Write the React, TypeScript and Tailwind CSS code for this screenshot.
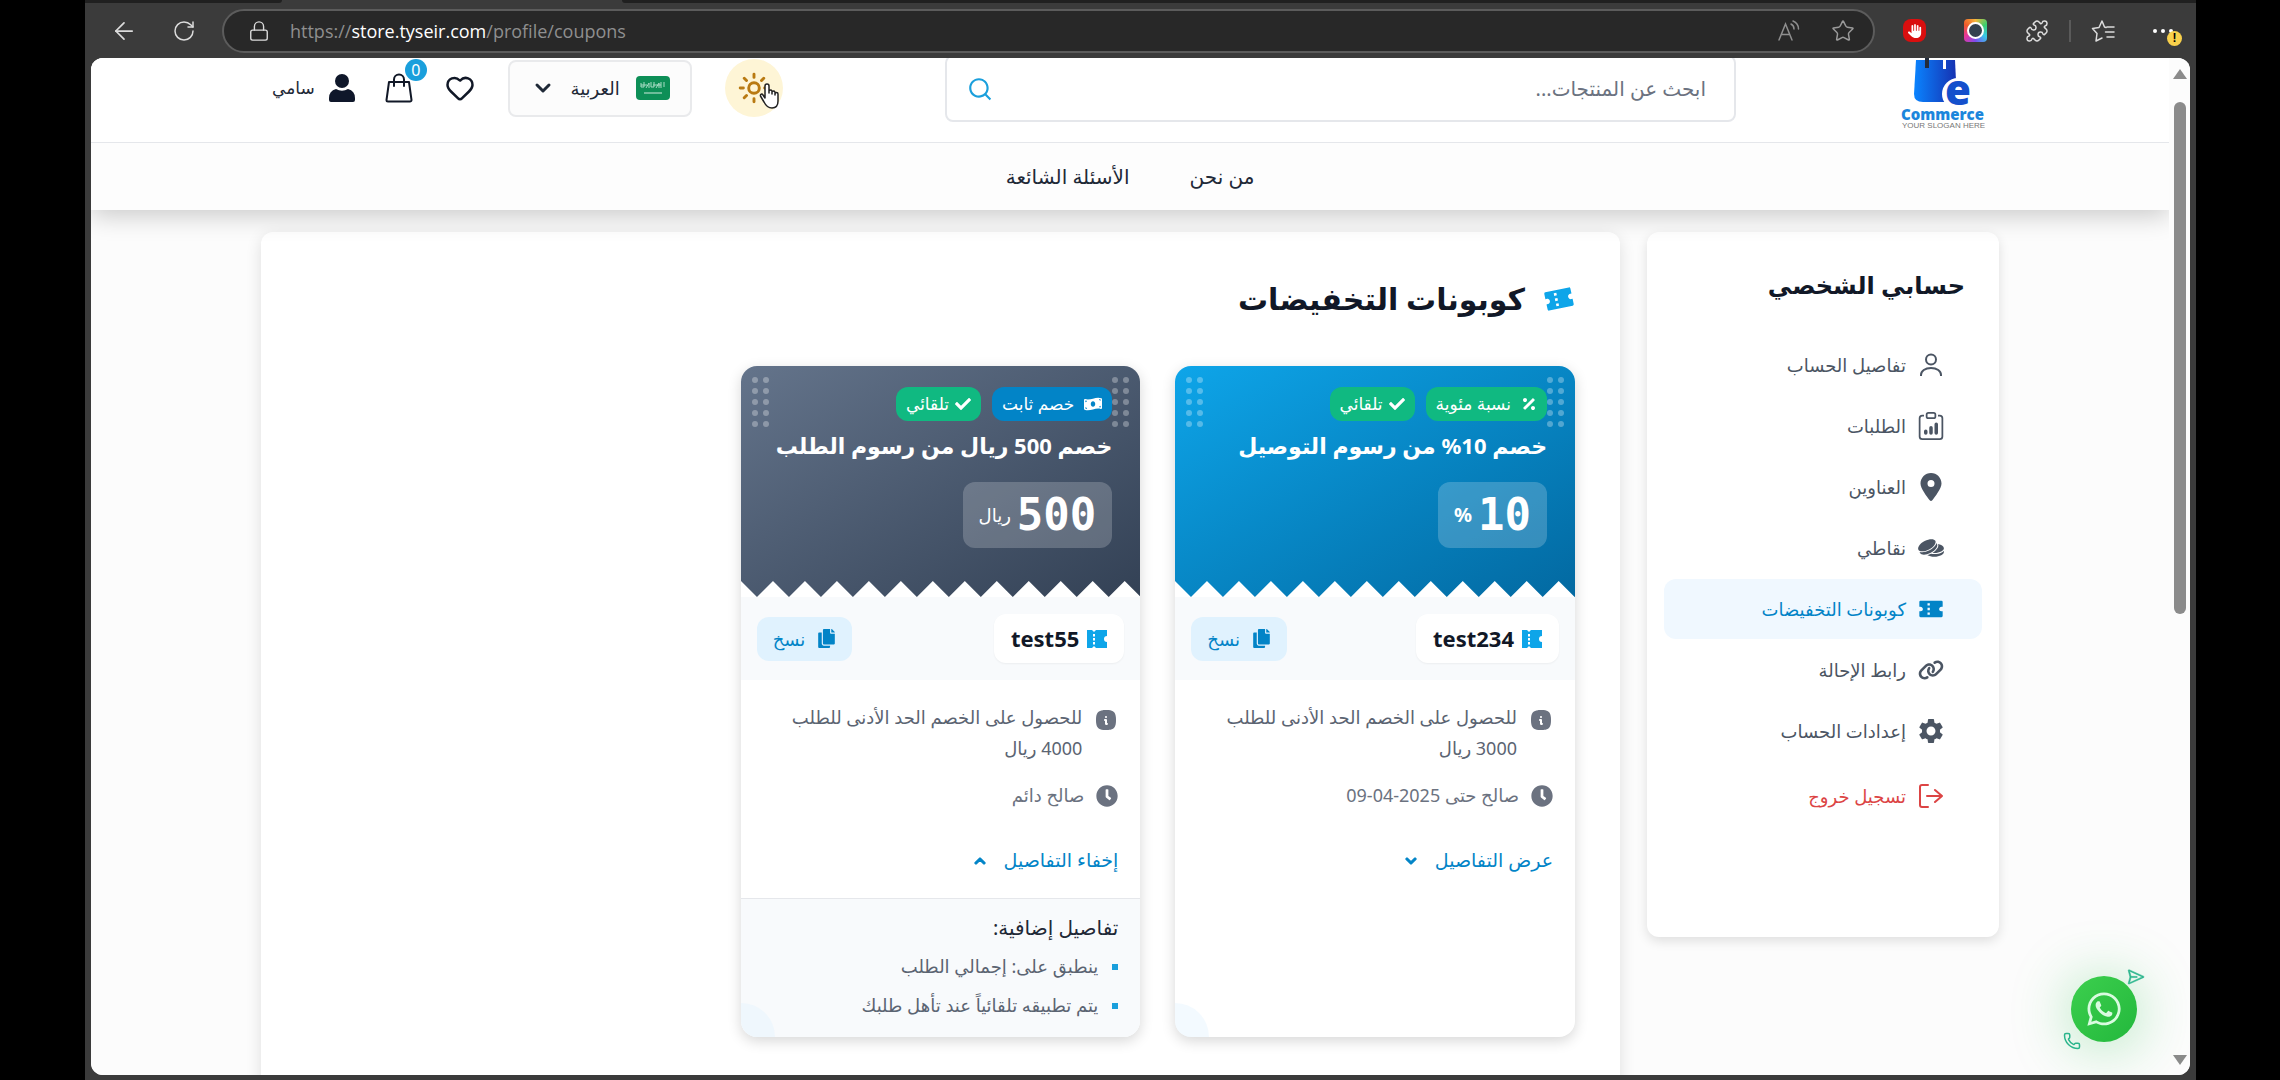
import React, { useState } from 'react';
import { ArrowLeft, ChevronDown, Heart, Lock, Phone, Puzzle, RotateCw, Star } from 'lucide-react';
import { BiSolidCoupon } from 'react-icons/bi';
import { BsClipboardData } from 'react-icons/bs';
import { FaCheck, FaChevronDown, FaChevronUp, FaClock, FaCopy, FaMoneyBillWave, FaPercentage, FaWhatsapp } from 'react-icons/fa';
import { FaHand, FaLink, FaLocationDot } from 'react-icons/fa6';
import { GiTwoCoins } from 'react-icons/gi';
import { IoSunnyOutline } from 'react-icons/io5';
import { MdSettings } from 'react-icons/md';
import { RiSearchLine } from 'react-icons/ri';
import { TbInfoSquareRoundedFilled } from 'react-icons/tb';
import { VscSend } from 'react-icons/vsc';

interface Coupon {
  code: string;
  title: string;
  type: 'percent' | 'fixed';
  typeLabel: string;
  value: string;
  unit: string;
  minimum: string;
  validity: string;
  details: string[];
}

const coupons: Coupon[] = [
  {
    code: 'test234',
    title: 'خصم 10% من رسوم التوصيل',
    type: 'percent',
    typeLabel: 'نسبة مئوية',
    value: '10',
    unit: '%',
    minimum: 'للحصول على الخصم الحد الأدنى للطلب 3000 ريال',
    validity: 'صالح حتى 2025-04-09',
    details: ['ينطبق على: رسوم التوصيل'],
  },
  {
    code: 'test55',
    title: 'خصم 500 ريال من رسوم الطلب',
    type: 'fixed',
    typeLabel: 'خصم ثابت',
    value: '500',
    unit: 'ريال',
    minimum: 'للحصول على الخصم الحد الأدنى للطلب 4000 ريال',
    validity: 'صالح دائم',
    details: ['ينطبق على: إجمالي الطلب', 'يتم تطبيقه تلقائياً عند تأهل طلبك'],
  },
];

const LogoutIcon = () => (
  <svg viewBox="0 0 24 24" className="size-6" fill="none" stroke="currentColor" strokeWidth="2" strokeLinecap="round" strokeLinejoin="round">
    <path d="M9 1H3a2 2 0 0 0-2 2v18a2 2 0 0 0 2 2h6M8 12h15M16 6l7 6-7 6" />
  </svg>
);

const ProfileIcon = () => (
  <svg viewBox="0 0 22 24" className="h-6 w-[22px]" fill="none" stroke="currentColor" strokeWidth="2">
    <circle cx="11" cy="6.500" r="5" />
    <path d="M1 23v-1c0-4 4-7 10-7s10 3 10 7v1" />
  </svg>
);

const BagIcon = () => (
  <svg viewBox="0 0 28 30" className="h-[30px] w-7" fill="none" stroke="currentColor" strokeWidth="2" strokeLinecap="round" strokeLinejoin="round">
    <path d="M4 9h20l2.500 18a1.500 1.500 0 0 1-1.500 1.500H3A1.500 1.500 0 0 1 1.500 27zM9 13V6.500a5 5 0 0 1 10 0V13" />
  </svg>
);

const PersonIcon = () => (
  <svg viewBox="0 0 26 28" className="h-7 w-[26px] text-[#0f172a]" fill="currentColor">
    <ellipse cx="13" cy="7" rx="7" ry="7" />
    <path d="M7 15q6 3.500 12 0 7 2 7 9v2q0 2-2 2H2q-2 0-2-2v-2q0-7 7-9z" />
  </svg>
);

const CodeTicketIcon = () => (
  <svg viewBox="0 0 20 18" className="h-[18px] w-5 text-[#0ea5e9]" fill="currentColor">
    <path d="M0 0h5l2 2 2-2h11v6a3 3 0 0 0 0 6v6H9l-2-2-2 2H0z" />
    <path d="M6 4h2v2.500H6zM6 8h2v2.500H6zM6 12h2v2.500H6z" fill="#fff" />
  </svg>
);

const Dots = () => (
  <div className="grid grid-cols-2 gap-[5px]">
    {Array.from({ length: 10 }, (_, i) => (
      <span key={i} className="size-[6px] rounded-full bg-white/30" />
    ))}
  </div>
);

// Torn ticket edge: 32px wide teeth, cropped by the card
const TornEdge = () => (
  <svg className="absolute bottom-0 left-0 h-4 w-full text-white" viewBox="0 0 400 16" preserveAspectRatio="none" fill="currentColor">
    <path d={'M0 16V0' + Array.from({ length: 13 }, (_, i) => `L${i * 32 + 16} 16L${i * 32 + 32} 0`).join('') + 'V16z'} />
  </svg>
);

const menu = [
  { label: 'تفاصيل الحساب', icon: <ProfileIcon /> },
  { label: 'الطلبات', icon: <BsClipboardData className="size-7" /> },
  { label: 'العناوين', icon: <FaLocationDot className="size-7" /> },
  { label: 'نقاطي', icon: <GiTwoCoins className="size-7" /> },
  { label: 'كوبونات التخفيضات', icon: <BiSolidCoupon className="size-7" />, active: true },
  { label: 'رابط الإحالة', icon: <FaLink className="size-[26px]" /> },
  { label: 'إعدادات الحساب', icon: <MdSettings className="size-[30px]" /> },
];

const BrowserBar = () => (
  <div className="bg-[#3b3b3b] text-[#dcdcdc]">
    <div className="flex h-[3px]">
      <div className="w-[197px] rounded-br-md bg-[#202020]" />
      <div className="w-[340px]" />
      <div className="flex-1 rounded-bl-md bg-[#202020]" />
    </div>
    <div className="flex h-[55px] items-center pr-[15px] pl-[25px]">
      <button aria-label="Back"><ArrowLeft className="size-7" strokeWidth={1.5} /></button>
      <button aria-label="Refresh" className="ml-[34px]"><RotateCw className="size-6" strokeWidth={1.5} /></button>
      <div className="ml-[26px] flex h-11 flex-1 items-center rounded-full border-2 border-[#5c5c5c] bg-[#282828] pr-[18px] pl-6">
        <Lock className="size-[22px]" strokeWidth={1.5} />
        <p className="ml-5 flex-1 font-['Open_Sans',sans-serif] text-lg text-[#8f8f8f]">
          https://<span className="text-white">store.tyseir.com</span>/profile/coupons
        </p>
        <button aria-label="Read aloud">
          <svg viewBox="0 0 24 24" className="size-6 text-[#8f8f8f]" fill="none" stroke="currentColor" strokeWidth="1.500" strokeLinecap="round">
            <path d="M2 21 8.500 5 15 21M4.500 15.500h8M14 5c2 1 3 3 3 5M16 2c3.500 1.500 5.500 4.500 5.500 8" />
          </svg>
        </button>
        <button aria-label="Favorite" className="ml-[30px]"><Star className="size-6 text-[#9a9a9a]" strokeWidth={1.5} /></button>
      </div>
      <span className="ml-7 flex size-[23px] items-center justify-center rounded-lg bg-[#d90f0f]">
        <FaHand className="size-[14px] text-white" />
      </span>
      <span className="ml-[38px] flex size-[23px] items-center justify-center rounded bg-[conic-gradient(#f6b73c,#3ccf6e,#38c8e8,#7a4df0,#e8359a,#ef5b2b,#f6b73c)]">
        <span className="size-[17px] rounded-full border-2 border-white bg-[#33414f]" />
      </span>
      <Puzzle className="ml-[38px] size-6" strokeWidth={1.5} />
      <span className="ml-5 h-[22px] w-0.5 bg-[#5a5a5a]" />
      <button aria-label="Favorites" className="ml-5">
        <svg viewBox="0 0 24 24" className="size-6" fill="none" stroke="currentColor" strokeWidth="1.500" strokeLinecap="round" strokeLinejoin="round">
          <path d="M15 8.500 13.500 8 11 2 8 8.500 1.500 9.500 6 14.500 5 22l6-3M16 8h7M14.500 13H23M16 18h7" />
        </svg>
      </button>
      <button aria-label="Settings and more" className="relative ml-[38px] flex h-6 w-7 items-center gap-1">
        <i className="size-1 rounded-full bg-white" />
        <i className="size-1 rounded-full bg-white" />
        <i className="size-1 rounded-full bg-white" />
        <span className="absolute top-3 left-3.5 flex size-[15px] items-center justify-center rounded-full bg-[#f8d04b] font-['Liberation_Sans',sans-serif] text-xs font-bold text-black">!</span>
      </button>
    </div>
  </div>
);

const Logo = () => (
  <a href="#" dir="ltr" aria-label="Commerce" className="mr-[184px] block shrink-0">
    <svg viewBox="0 0 84 74" className="h-[74px] w-[84px]">
      <defs>
        <linearGradient id="bag" x1="0" x2="1">
          <stop offset="0" stopColor="#0a84ff" />
          <stop offset="1" stopColor="#1630b0" />
        </linearGradient>
      </defs>
      <path d="M15 5h39l2 42H22q-9 0-9-8z" fill="url(#bag)" />
      <path d="M42 4h3v10h-3z" fill="#fff" />
      <path d="M24 0h4v13h-4z" fill="#222b3a" />
      <circle cx="57" cy="39" r="16" fill="#fff" />
      <text x="44" y="50" fontFamily="Open Sans, sans-serif" fontWeight="800" fontSize="42" fill="#1450cc">e</text>
      <text x="0" y="65" fontFamily="Open Sans, sans-serif" fontWeight="800" fontSize="15" fill="#1c86dc">Commerce</text>
      <text x="1" y="73" fontFamily="Liberation Sans, sans-serif" fontSize="8" fill="#777">YOUR SLOGAN HERE</text>
    </svg>
  </a>
);

const Header = () => (
  <header className="relative z-10 bg-white shadow-[0_6px_24px_rgba(0,0,0,0.2)]">
    <div className="-mt-[3px] flex h-[88px] items-start border-b border-[#e5e7eb] pl-[181px]">
      <Logo />
      <form className="mr-[165px] flex h-[67px] w-[791px] items-center rounded-lg border-2 border-[#e5e7eb] px-6">
        <input aria-label="بحث" placeholder="ابحث عن المنتجات..." className="min-w-0 flex-1 px-1 text-xl outline-none placeholder:text-[#6b7280]" />
        <button type="button" aria-label="بحث" className="-ml-1 text-[#1a9fdc]"><RiSearchLine className="size-[26px]" /></button>
      </form>
      <div className="mr-auto flex h-[66px] items-center">
        <button aria-label="الوضع الليلي" className="relative flex size-[58px] items-center justify-center rounded-full bg-[#fef5d6] text-[#b97a12]">
          <IoSunnyOutline className="size-[34px] [&>*]:stroke-[44px]" />
          <svg viewBox="0 0 20 26" className="absolute top-6 left-[34px] h-[26px] w-5" fill="#fff" stroke="#222" strokeWidth="1.500" strokeLinejoin="round">
            <path d="M6 15V3a2 2 0 0 1 4 0v7V8a1.700 1.700 0 0 1 3 0v3-2a1.700 1.700 0 0 1 3 0v3-1a1.500 1.500 0 0 1 3 0v7c0 4-2 7-6 7s-6-2-8-6l-3.500-6c-.500-2 1.500-2.500 2.500-1z" />
          </svg>
        </button>
        <button className="mr-[33px] flex h-[57px] w-[184px] items-center rounded-lg border-2 border-[#e9eaec] bg-[#fcfcfc] pr-5 text-lg text-[#1f2937]">
          <svg viewBox="0 0 34 24" className="h-6 w-[34px]">
            <rect width="34" height="24" rx="4" fill="#0d8f57" />
            <path d="M5 7v4h3V6m2 6 3-5v5m2-6v5h3V6m2 6 3-5v5m2-6v6m3-6v5M5 9h6m6 0h8" fill="none" stroke="#a9dcc5" />
            <path d="M8 17h18" stroke="#cfeadd" />
          </svg>
          <span className="mr-4">العربية</span>
          <ChevronDown className="mr-4 size-6" strokeWidth={3} />
        </button>
        <button aria-label="المفضلة" className="mr-[33px] text-[#111827]"><Heart className="size-[30px]" strokeWidth={2} /></button>
        <button aria-label="السلة" className="relative mr-8 text-[#111827]">
          <BagIcon />
          <span className="absolute -top-3.5 -right-3.5 flex size-[22px] items-center justify-center rounded-full bg-[#1a9fdc] text-base text-white">0</span>
        </button>
        <button className="mr-[30px] flex items-center gap-3.5 text-[17px] text-[#1f2937]">
          <PersonIcon />
          سامي
        </button>
      </div>
    </div>
    <nav className="flex h-[67px] items-center justify-center gap-[60px] bg-[#fdfdfd] text-xl text-[#1f2937]">
      <a href="#">من نحن</a>
      <a href="#">الأسئلة الشائعة</a>
    </nav>
  </header>
);

const Sidebar = () => (
  <aside className="h-[705px] w-[352px] shrink-0 rounded-xl bg-white px-[17px] pt-[31px] shadow-[0_4px_12px_rgba(0,0,0,0.12)]">
    <h2 className="px-[17px] text-2xl leading-[44px] font-bold text-[#111827]">حسابي الشخصي</h2>
    <ul className="mt-7">
      {menu.map((item) => (
        <li key={item.label}>
          <a
            href="#"
            className={`mb-px flex h-[60px] items-center gap-3 rounded-xl px-[38px] text-lg ${item.active ? 'bg-[#f0f8ff] text-[#0284c7]' : 'text-[#4b5563]'}`}
          >
            <span className="flex w-[26px] shrink-0 justify-center [&>svg]:shrink-0">{item.icon}</span>
            {item.label}
          </a>
        </li>
      ))}
    </ul>
    <button className="mt-[5px] flex h-[60px] items-center gap-3 px-[38px] text-lg text-[#dc4444]">
      <span className="flex w-[26px] justify-center"><LogoutIcon /></span>
      تسجيل خروج
    </button>
  </aside>
);

interface CouponCardProps {
  coupon: Coupon;
  defaultOpen: boolean;
}

const CouponCard: React.FC<CouponCardProps> = ({ coupon, defaultOpen }) => {
  const [open, setOpen] = useState(defaultOpen);
  const isPercent = coupon.type === 'percent';

  return (
    <article className="relative min-h-[670px] overflow-hidden rounded-2xl bg-white shadow-[0_4px_14px_rgba(0,0,0,0.16)]">
      <div className={`relative h-[231px] bg-linear-to-br px-7 pt-[21px] text-white ${isPercent ? 'from-[#0ea5e9] to-[#0369a1]' : 'from-[#64748b] to-[#334155]'}`}>
        <div className="absolute top-[11px] right-[11px]"><Dots /></div>
        <div className="absolute top-[11px] left-[11px]"><Dots /></div>
        <div className="relative flex gap-[11px] text-[17px]">
          <span className={`flex h-[34px] items-center gap-2.5 rounded-xl px-[10px] ${isPercent ? 'bg-[#10b981]' : 'bg-[#0284c7]'}`}>
            {isPercent ? <FaPercentage className="size-4" /> : <FaMoneyBillWave className="size-[18px]" />}
            {coupon.typeLabel}
          </span>
          <span className="flex h-[34px] items-center gap-1.5 rounded-xl bg-[#10b981] px-[10px]">
            <FaCheck className="size-4" />
            تلقائي
          </span>
        </div>
        <h3 className="mt-1.5 text-[22px] leading-9 font-bold whitespace-nowrap">{coupon.title}</h3>
        <div className="mt-[19px] flex h-[66px] w-fit items-center gap-1.5 rounded-xl bg-white/20 px-4">
          <span className="font-['DejaVu_Sans_Mono',monospace] text-[44px] leading-none font-bold">{coupon.value}</span>
          <span className={isPercent ? 'text-xl font-bold' : 'text-lg'}>{coupon.unit}</span>
        </div>
        <TornEdge />
      </div>

      <div className="flex h-[83px] items-center justify-between bg-[#f8fafc] px-4">
        <div className="flex h-[49px] items-center gap-2 rounded-xl bg-white px-[17px] font-bold text-[#111827] shadow-xs">
          <CodeTicketIcon />
          <span className="font-['Noto_Sans',sans-serif] text-[22px]">{coupon.code}</span>
        </div>
        <button className="flex h-11 items-center gap-3 rounded-xl bg-[#e0f2fe] px-4 text-lg text-[#0284c7]">
          <FaCopy className="size-[19px]" />
          نسخ
        </button>
      </div>

      <div className="px-[22px] pt-[22px] text-lg text-[#6b7280]">
        <div className="flex gap-3 text-[#5b6472]">
          <TbInfoSquareRoundedFilled className="mt-1.5 size-6 shrink-0 text-[#6b7280]" />
          <p className="leading-[31px]">{coupon.minimum}</p>
        </div>
        <div className="mt-4 flex items-center gap-3 leading-[31px]">
          <FaClock className="size-[22px] shrink-0" />
          {coupon.validity}
        </div>
        <button onClick={() => setOpen(!open)} className="mt-[34px] flex h-[31px] items-center gap-[18px] text-[19px] text-[#0284c7]">
          {open ? 'إخفاء التفاصيل' : 'عرض التفاصيل'}
          {open ? <FaChevronUp className="size-3 stroke-current stroke-[50px]" /> : <FaChevronDown className="size-3 stroke-current stroke-[50px]" />}
        </button>
      </div>

      {open && (
        <div className="mt-[22px] h-[139px] border-t border-[#e5e7eb] bg-[#f8fafc] px-[22px] pt-[13px] text-lg text-[#5b6472]">
          <h4 className="text-xl leading-8 text-[#1f2937]">تفاصيل إضافية:</h4>
          <ul className="mt-[3px]">
            {coupon.details.map((detail) => (
              <li key={detail} className="flex items-center gap-3.5 leading-[39px]">
                <i className="size-[6px] bg-[#1a9fdc]" />
                {detail}
              </li>
            ))}
          </ul>
        </div>
      )}
      <span className="absolute bottom-0 left-0 size-[34px] rounded-tr-full bg-[#e0f2fe]/40" />
    </article>
  );
};

const WhatsAppButton = () => (
  <a
    href="#"
    aria-label="WhatsApp"
    className="absolute right-[53px] bottom-[33px] z-20 flex size-[66px] items-center justify-center rounded-full bg-linear-to-br from-[#3ccf4e] to-[#22b83c] shadow-[0_4px_60px_rgba(37,190,70,0.4)]"
  >
    <FaWhatsapp className="size-[38px] text-[#d9fbe0]" />
    <VscSend className="absolute -top-2 -right-2 size-[18px] stroke-[0.5px] text-[#2bb58c]" />
    <Phone className="absolute -bottom-2 -left-2 size-[18px] text-[#2bb58c]" strokeWidth={2} />
  </a>
);

const Scrollbar = () => (
  <div className="flex w-[21px] shrink-0 flex-col items-center justify-between bg-[#fcfcfc] py-2.5">
    <div className="flex flex-col items-center gap-[23px]">
      <svg viewBox="0 0 14 10" className="mt-px h-2.5 w-3.5" fill="#8b8b8b"><path d="M7 0l7 10H0z" /></svg>
      <div className="h-[512px] w-3 rounded-full bg-[#8b8b8b]" />
    </div>
    <svg viewBox="0 0 14 10" className="h-2.5 w-3.5" fill="#8b8b8b"><path d="M7 10l7-10H0z" /></svg>
  </div>
);

export default function App() {
  return (
    <div className="h-screen bg-black pr-[84px] pl-[85px]">
      <div className="flex h-full flex-col bg-[#3b3b3b]">
        <BrowserBar />
        <div className="relative mr-1.5 mb-[5px] ml-1.5 flex min-h-0 flex-1 overflow-hidden rounded-xl bg-white">
          <div dir="rtl" className="flex min-w-0 flex-1 flex-col overflow-hidden bg-[#fcfcfc] font-['Noto_Sans','DejaVu_Sans',sans-serif]">
            <Header />
            <div className="flex min-h-0 flex-1 items-start gap-[27px] px-[170px] pt-[22px]">
              <Sidebar />
              <main className="min-h-[900px] flex-1 rounded-xl bg-white px-[45px] pt-[43px] shadow-[0_4px_16px_rgba(0,0,0,0.12)]">
                <h1 className="flex h-12 items-center gap-[18px] text-3xl font-bold text-[#111827]">
                  <BiSolidCoupon className="size-8 -rotate-12 text-[#0ea5e9]" />
                  كوبونات التخفيضات
                </h1>
                <div className="mt-[43px] grid grid-cols-3 gap-[35px]">
                  {coupons.map((coupon) => (
                    <CouponCard key={coupon.code} coupon={coupon} defaultOpen={coupon.type === 'fixed'} />
                  ))}
                </div>
              </main>
            </div>
          </div>
          <Scrollbar />
          <WhatsAppButton />
        </div>
      </div>
    </div>
  );
}
